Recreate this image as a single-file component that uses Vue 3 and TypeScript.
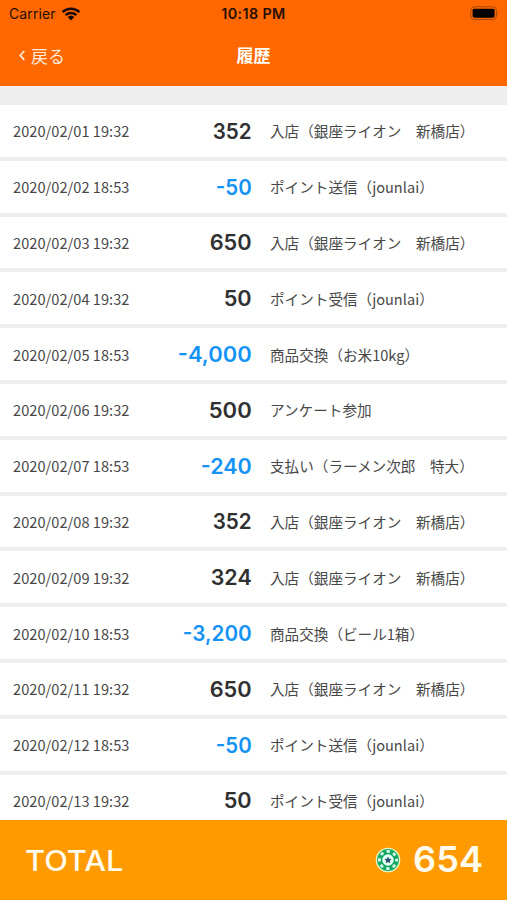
<script setup lang="ts">
interface Entry {
  date: string
  amount: string
  width: number
  note: string
}

const entries: Entry[] = [
  { date: '2020/02/01 19:32', amount: '352', width: 39, note: '入店（銀座ライオン　新橋店）' },
  { date: '2020/02/02 18:53', amount: '-50', width: 36, note: 'ポイント送信（jounlai）' },
  { date: '2020/02/03 19:32', amount: '650', width: 42, note: '入店（銀座ライオン　新橋店）' },
  { date: '2020/02/04 19:32', amount: '50', width: 28, note: 'ポイント受信（jounlai）' },
  { date: '2020/02/05 18:53', amount: '-4,000', width: 74, note: '商品交換（お米10kg）' },
  { date: '2020/02/06 19:32', amount: '500', width: 43, note: 'アンケート参加' },
  { date: '2020/02/07 18:53', amount: '-240', width: 51, note: '支払い（ラーメン次郎　特大）' },
  { date: '2020/02/08 19:32', amount: '352', width: 39, note: '入店（銀座ライオン　新橋店）' },
  { date: '2020/02/09 19:32', amount: '324', width: 41, note: '入店（銀座ライオン　新橋店）' },
  { date: '2020/02/10 18:53', amount: '-3,200', width: 69, note: '商品交換（ビール1箱）' },
  { date: '2020/02/11 19:32', amount: '650', width: 42, note: '入店（銀座ライオン　新橋店）' },
  { date: '2020/02/12 18:53', amount: '-50', width: 36, note: 'ポイント送信（jounlai）' },
  { date: '2020/02/13 19:32', amount: '50', width: 28, note: 'ポイント受信（jounlai）' },
]
</script>

<template>
  <div class="screen">
    <header class="header">
      <div class="status">
        <div class="carrier">
          <span class="carrier-name">Carrier</span>
          <svg class="wifi" width="20" height="14" viewBox="0 0 20 14">
            <path d="M1.6 5.2a12.2 12.2 0 0 1 16.8 0M4.6 8.2a7.9 7.9 0 0 1 10.8 0" />
            <path class="wifi-dot" d="M6.7 10.1a4.8 4.8 0 0 1 6.600 0L10 13.500z" />
          </svg>
        </div>
        <span class="time">10:18 PM</span>
        <div class="battery">
          <svg width="30" height="15" viewBox="0 0 30 15">
            <rect x=".8" y=".8" width="25.6" height="12.800" rx="3.600" fill="none" stroke="#a54608" />
            <rect x="2.600" y="2.700" width="22" height="9" rx="1.600" />
            <path d="M27.700 5.200q1.600 2.100 0 4.200z" fill="#a54608" />
          </svg>
        </div>
      </div>
      <nav class="nav">
        <a class="back">
          <svg width="7" height="11" viewBox="0 0 7 11"><path d="M5.3 1 1.2 5.4l4.1 4.4" /></svg>
          <span>戻る</span>
        </a>
        <h1 class="title">履歴</h1>
      </nav>
    </header>

    <main class="list">
      <div v-for="entry in entries" :key="entry.date" class="row">
        <time class="date">{{ entry.date }}</time>
        <svg class="amount" :class="{ minus: entry.amount.startsWith('-') }" width="90" height="28">
          <text
            :x="90.7 - entry.width"
            y="22.2"
            :textLength="entry.width"
            lengthAdjust="spacingAndGlyphs"
          >{{ entry.amount }}</text>
        </svg>
        <span class="note">{{ entry.note }}</span>
      </div>
    </main>

    <footer class="footer">
      <svg class="total-label" width="104" height="40">
        <text x="0" y="31" textLength="98.500" lengthAdjust="spacingAndGlyphs">TOTAL</text>
      </svg>
      <div class="total">
        <svg class="chip" width="26" height="26" viewBox="0 0 26 26">
          <circle cx="13" cy="13" r="12.3" fill="#e8f8c4" />
          <circle cx="13" cy="13" r="10.9" fill="#12a866" />
          <circle cx="13" cy="13" r="8.600" fill="none" stroke="#dcf7e5" stroke-width="2.800" stroke-dasharray="3.300 3.454" stroke-dashoffset="1.650" />
          <circle cx="13" cy="13" r="5.700" fill="#e8fff4" />
          <path d="m13 9.400 1.100 2.300 2.500.3-1.800 1.800.4 2.500-2.200-1.200-2.200 1.200.4-2.500L9.400 12l2.500-.3z" fill="#24506a" />
        </svg>
        <svg class="total-value" width="70" height="46">
          <text x="0" y="34.500" textLength="70" lengthAdjust="spacingAndGlyphs">654</text>
        </svg>
      </div>
    </footer>
  </div>
</template>

<style>
body {
  overflow: hidden;
}
</style>

<style scoped>
.screen {
  display: flex;
  flex-direction: column;
  width: 507px;
  height: 900px;
  overflow: hidden;
  background: #eee;
  color: #484848;
  font-family: "Noto Sans CJK JP", sans-serif;
}
.header {
  flex: none;
  height: 86px;
  background: #ff6800;
}
.status {
  display: grid;
  grid-template-columns: 1fr auto 1fr;
  align-items: center;
  height: 27px;
  padding: 0 7px 0 9px;
  color: #260f00;
  font-family: Inter, sans-serif;
  font-size: 14px;
}
.carrier {
  display: flex;
  align-items: center;
  gap: 5px;
}
.carrier-name {
  letter-spacing: 0.1px;
}
.wifi {
  fill: none;
  stroke: #1a0a00;
  stroke-width: 2.5;
}
.wifi-dot {
  fill: #1a0a00;
  stroke: none;
}
.time {
  margin-left: -2px;
  font-size: 14.3px;
  font-weight: 600;
  letter-spacing: 0.4px;
}
.battery {
  display: flex;
  justify-content: flex-end;
}
.nav {
  display: grid;
  grid-template-columns: 1fr auto 1fr;
  align-items: center;
  height: 56px;
  padding: 0 19px;
  color: #fff;
}
.back {
  display: flex;
  align-items: center;
  gap: 5px;
  color: #ffeadb;
  font-size: 17px;
}
.back svg {
  fill: none;
  stroke: #ffeadb;
  stroke-width: 1.7;
}
.title {
  margin: -2px 0 0;
  font-size: 17px;
  font-weight: 700;
}
.list {
  display: flex;
  flex: none;
  flex-direction: column;
  gap: 4px;
  height: 715.4px;
  padding-top: 19px;
  overflow: hidden;
}
.row {
  display: grid;
  flex: none;
  grid-template-columns: 148px 90px 1fr;
  align-items: center;
  height: 51.8px;
  padding-left: 13px;
  background: #fff;
  font-size: 14.6px;
  white-space: nowrap;
}
.date {
  letter-spacing: 0.03px;
}
.note {
  padding-left: 19px;
}
.amount {
  fill: #303030;
  font: 600 21.5px Inter, sans-serif;
  overflow: visible;
}
.minus {
  fill: #1593f5;
}
.footer {
  display: flex;
  flex: none;
  align-items: center;
  justify-content: space-between;
  height: 80px;
  margin-top: -0.4px;
  padding: 0 24px 0 25px;
  background: #ff9a00;
  fill: #fffbed;
  font-family: Inter, sans-serif;
}
.total-label {
  font-size: 28px;
  font-weight: 500;
}
.total {
  display: flex;
  align-items: center;
  gap: 12px;
}
.total-value {
  overflow: visible;
  font-size: 35.5px;
  font-weight: 600;
}
</style>
